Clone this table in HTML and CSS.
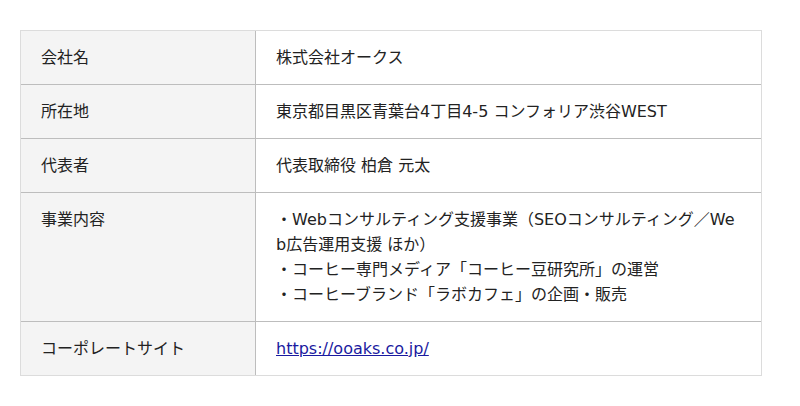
FILE: index.html
```html
<!DOCTYPE html>
<html lang="ja">
<head>
<meta charset="utf-8">
<link rel="stylesheet" href="styles.css">
</head>
<body>
<div class="page">
  <table class="info">
    <tr>
      <th>会社名</th>
      <td>株式会社オークス</td>
    </tr>
    <tr>
      <th>所在地</th>
      <td>東京都目黒区青葉台4丁目4-5 コンフォリア渋谷WEST</td>
    </tr>
    <tr>
      <th>代表者</th>
      <td>代表取締役 柏倉 元太</td>
    </tr>
    <tr>
      <th>事業内容</th>
      <td>・Webコンサルティング支援事業（SEOコンサルティング／Web広告運用支援 ほか）<br>・コーヒー専門メディア「コーヒー豆研究所」の運営<br>・コーヒーブランド「ラボカフェ」の企画・販売</td>
    </tr>
    <tr>
      <th>コーポレートサイト</th>
      <td><a href="#">https://ooaks.co.jp/</a></td>
    </tr>
  </table>
</div>
</body>
</html>
```

FILE: styles.css
```css
html, body {
  margin: 0;
  background: #fff;
}
.page {
  padding: 30px 20px;
}
.info {
  width: 742px;
  border-collapse: separate;
  border-spacing: 0;
  border: 1px solid #dcdcdc;
  font-family: "DejaVu Sans", "Noto Sans CJK JP", sans-serif;
  font-size: 16px;
  line-height: 25px;
  color: #222;
  table-layout: fixed;
}
.info th,
.info td {
  text-align: left;
  vertical-align: top;
  font-weight: normal;
  padding: 14px 20px;
  word-break: break-all;
}
.info th {
  width: 194px;
  background: #f4f4f4;
  border-right: 1px solid #bdbdbd;
}
.info tr + tr th,
.info tr + tr td {
  border-top: 1px solid #bdbdbd;
}
.info a {
  color: #1a1aa0;
  text-decoration: underline;
}
```
